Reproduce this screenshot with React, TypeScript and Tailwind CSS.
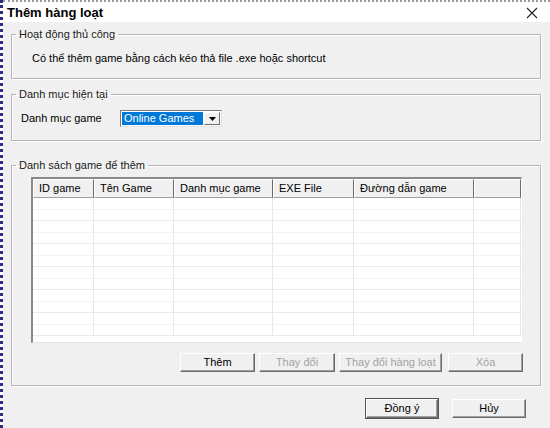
import type { ReactNode } from "react";

const font = { fontFamily: '"Liberation Sans", Arial, sans-serif' };

function Group({ title, className, children }: { title: string; className?: string; children: ReactNode }) {
  return (
    <fieldset
      className={
        "ml-[8px] mr-[8px] border border-[#b4b4b4] shadow-[inset_1px_1px_0_#ffffff,1px_1px_0_#ffffff] " + (className ?? "")
      }
    >
      <legend className="ml-[4px] px-[3px] text-[11px] leading-[13px] text-[#1a1a1a]">{title}</legend>
      {children}
    </fieldset>
  );
}

function Btn({ children, disabled, className }: { children: ReactNode; disabled?: boolean; className?: string }) {
  return (
    <button
      className={
        "flex h-[19px] items-center justify-center border-t border-l border-t-white border-l-white border-r border-b border-r-[#6b6b6b] border-b-[#6b6b6b] bg-[#f0f0f0] text-[11px] shadow-[inset_-1px_-1px_0_#a0a0a0] " +
        (disabled ? "text-[#a3a3a3] " : "text-black ") +
        (className ?? "")
      }
    >
      {children}
    </button>
  );
}

const cols = [
  { label: "ID game", w: "w-[61px]" },
  { label: "Tên Game", w: "w-[80px]" },
  { label: "Danh mục game", w: "w-[99px]" },
  { label: "EXE File", w: "w-[81px]" },
  { label: "Đường dẫn game", w: "w-[120px]" },
  { label: "", w: "flex-1" },
];

function GameTable() {
  const rows = Array.from({ length: 12 });
  return (
    <div className="ml-[19px] mr-[18px] flex h-[166px] flex-col border-t-2 border-l-2 border-t-[#8a8a8a] border-l-[#8a8a8a] border-r border-b border-r-white border-b-[#e3e3e3] bg-white">
      <div className="flex h-[19px] shrink-0">
        {cols.map((c, i) => (
          <div
            key={i}
            className={
              c.w +
              " flex items-center border-t border-l border-t-white border-l-white border-r border-b border-r-[#6b6b6b] border-b-[#a0a0a0] bg-[#f0f0f0] pl-[5px] text-[11px] text-black"
            }
          >
            {c.label}
          </div>
        ))}
      </div>
      <div className="flex-1 overflow-hidden">
        {rows.map((_, r) => (
          <div key={r} className={"flex h-[11.5px] border-b " + (r % 2 ? "border-b-[#ebebeb]" : "border-b-[#f3f3f3]")}>
            {cols.map((c, i) => (
              <div key={i} className={c.w + " border-r border-r-[#e6e6e6]"} />
            ))}
          </div>
        ))}
      </div>
    </div>
  );
}

export default function App() {
  return (
    <div className="flex h-[428px] w-[550px] overflow-hidden bg-white" style={font}>
      <div className="w-[3px] shrink-0 border-l-[3px] border-dotted border-l-[#2b2b80]" />
      <div className="flex flex-1 flex-col">
        <div className="h-[3px] shrink-0 border-t-2 border-dotted border-t-[#9a9a9a]" />
        <div className="flex h-[19px] shrink-0 items-center justify-between bg-white pl-[4px] pr-[12px]">
          <span className="text-[13px] font-bold text-black">Thêm hàng loạt</span>
          <svg width="12" height="12" viewBox="0 0 12 12" className="mt-[1px]">
            <path d="M1 1 L11 11 M11 1 L1 11" stroke="#222" strokeWidth="1.1" />
          </svg>
        </div>
        <div className="flex flex-1 flex-col bg-[#f0f0f0] pr-[1px] text-[11px] text-black">
          <Group title="Hoạt động thủ công" className="mt-[6px] h-[51px]">
            <div className="pl-[20px] pt-[9px] text-[11px]">Có thể thêm game bằng cách kéo thả file .exe hoặc shortcut</div>
          </Group>

          <Group title="Danh mục hiện tại" className="mt-[9px] h-[53px]">
            <div className="flex items-center pl-[9px] pt-[9px]">
              <span className="w-[99px]">Danh mục game</span>
              <div className="flex h-[17px] w-[102px] items-center border border-t-[#7a7a7a] border-l-[#7a7a7a] border-r-[#e0e0e0] border-b-[#e0e0e0] bg-white p-[1px]">
                <div className="flex h-full flex-1 items-center bg-[#0078d7] pl-[2px] text-[11px] text-white">Online Games</div>
                <div className="ml-[1px] flex h-full w-[16px] items-center justify-center border-t border-l border-t-white border-l-white border-r border-b border-r-[#6b6b6b] border-b-[#6b6b6b] bg-[#f0f0f0]">
                  <svg width="7" height="4" viewBox="0 0 7 4">
                    <path d="M0 0 H7 L3.5 4 Z" fill="#000" />
                  </svg>
                </div>
              </div>
            </div>
          </Group>

          <Group title="Danh sách game để thêm" className="mt-[18px] h-[227px]">
            <div className="pt-[5px]">
              <GameTable />
              <div className="mt-[10px] flex gap-[4px] pl-[168px]">
                <Btn className="w-[75px]">Thêm</Btn>
                <Btn disabled className="w-[76px]">Thay đổi</Btn>
                <Btn disabled className="w-[103px]">Thay đổi hàng loạt</Btn>
                <Btn disabled className="ml-[2px] w-[75px]">Xóa</Btn>
              </div>
            </div>
          </Group>

          <div className="mt-[13px] flex gap-[14px] pl-[363px]">
            <Btn className="w-[72px] outline outline-1 outline-[#555]">Đồng ý</Btn>
            <Btn className="w-[74px]">Hủy</Btn>
          </div>
        </div>
      </div>
    </div>
  );
}
